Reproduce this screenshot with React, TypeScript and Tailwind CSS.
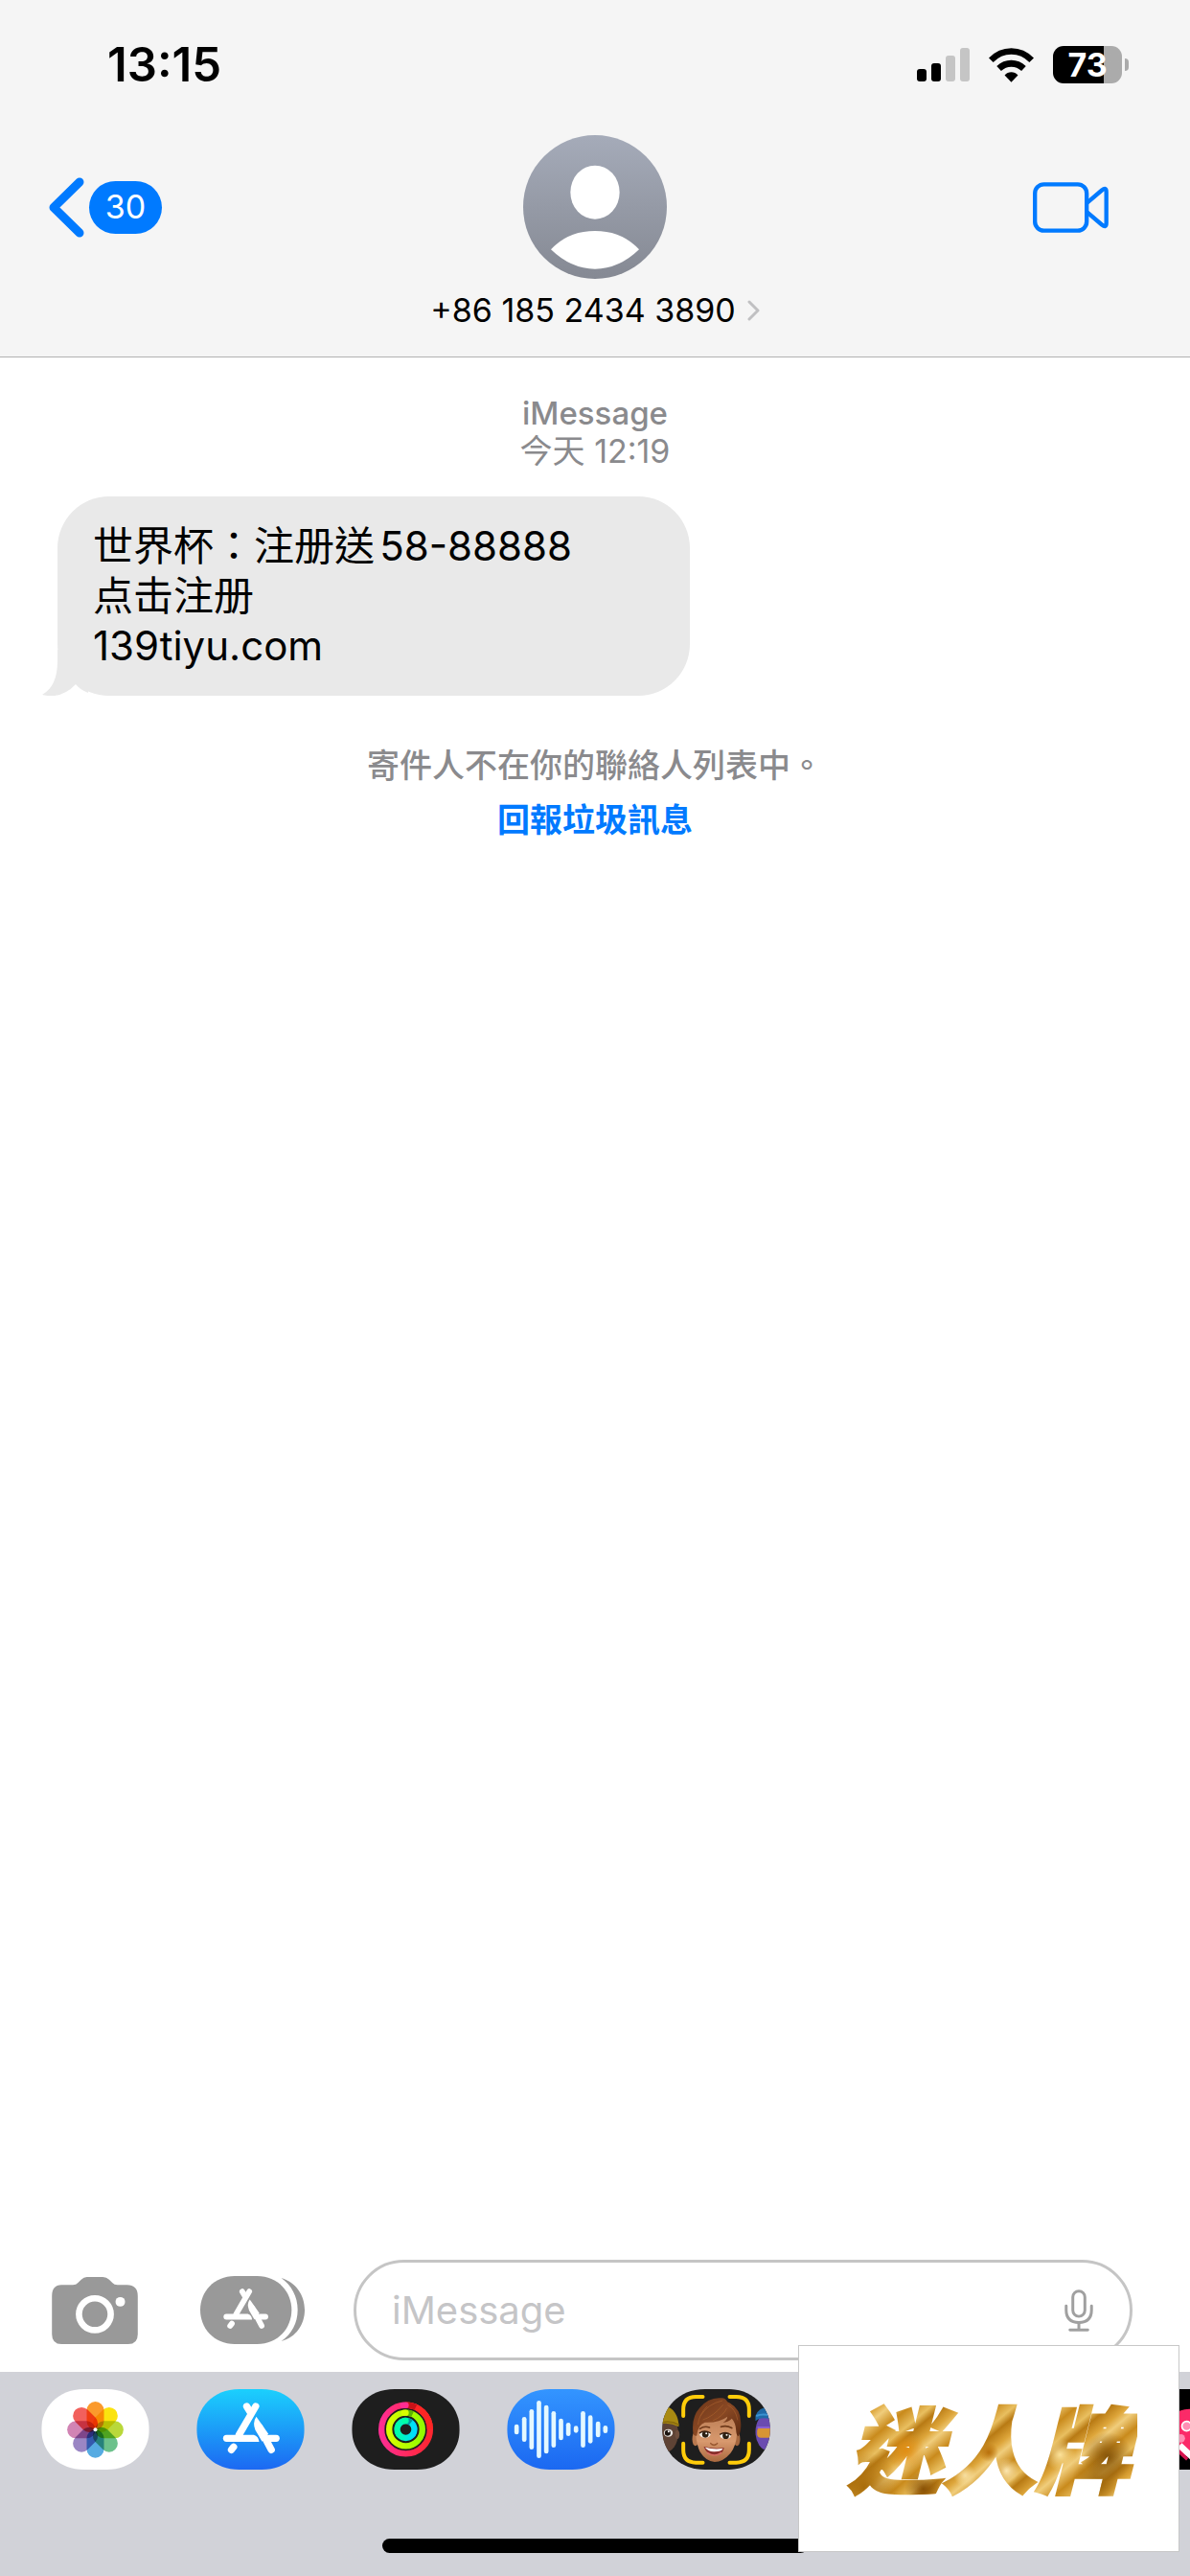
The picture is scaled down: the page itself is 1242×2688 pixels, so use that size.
import type { ReactNode } from 'react';

interface DockApp {
  id: string;
  label: string;
  icon: ReactNode;
}

const PILL = 'M0 126 C0 62 48 0 134 0 H204 C290 0 338 62 338 126 C338 190 290 252 204 252 H134 C48 252 0 190 0 126 Z';

const petals = [
  { angle: 0, color: '#fb9a2c' },
  { angle: 45, color: '#fbe30f' },
  { angle: 90, color: '#b9d83a' },
  { angle: 135, color: '#6cc18b' },
  { angle: 180, color: '#56abe2' },
  { angle: 225, color: '#9a86c4' },
  { angle: 270, color: '#d184b4' },
  { angle: 315, color: '#f2605c' },
];

const waveBars = [
  { x: 30, h: 32 },
  { x: 54, h: 78 },
  { x: 77, h: 126 },
  { x: 100, h: 180 },
  { x: 123, h: 152 },
  { x: 146, h: 114 },
  { x: 169, h: 68 },
  { x: 192, h: 42 },
  { x: 216, h: 22 },
  { x: 238, h: 114 },
  { x: 261, h: 88 },
  { x: 285, h: 50 },
  { x: 308, h: 24 },
];

function Pill({ id, children }: { id: string; children: ReactNode }) {
  return (
    <svg viewBox="0 0 338 252" className="block h-[84px] w-[113px]" aria-hidden="true">
      <defs>
        <clipPath id={`${id}-clip`}>
          <path d={PILL} />
        </clipPath>
      </defs>
      <g clipPath={`url(#${id}-clip)`}>{children}</g>
    </svg>
  );
}

// The three crossed sticks of the App Store, drawn in a 177x160 box
function StoreGlyph() {
  return (
    <g stroke="#fff" strokeWidth="22" strokeLinecap="round" strokeLinejoin="round" fill="none">
      <path d="M102 12 L50 101" />
      <path d="M74 12 L86 32" />
      <path d="M145 112 H166" />
      <path d="M113 76 L151 148" />
      <path d="M33 139 L26 148" />
      <path d="M11 101 H96 Q111 105 113 123 H11 A11 11 0 0 1 11 101 Z" fill="#fff" stroke="none" />
      <path d="M104 44 Q91 62 101 86 L122 122 L142 98 Z" fill="#fff" stroke="none" />
    </g>
  );
}

function PhotosIcon() {
  return (
    <Pill id="photos">
      <rect width="338" height="252" fill="#fff" />
      <g transform="translate(169 127)">
        {petals.map((petal) => (
          <rect
            key={petal.angle}
            x="-27"
            y="-88"
            width="54"
            height="88"
            rx="27"
            fill={petal.color}
            transform={`rotate(${petal.angle})`}
            className="mix-blend-multiply"
          />
        ))}
        <circle r="6" fill="#fff" />
      </g>
    </Pill>
  );
}

function StoreIcon() {
  return (
    <Pill id="store">
      <linearGradient id="store-bg" x1="0" y1="0" x2="0" y2="1">
        <stop offset="0" stopColor="#1bd0fd" />
        <stop offset="1" stopColor="#1c68f2" />
      </linearGradient>
      <rect width="338" height="252" fill="url(#store-bg)" />
      <g transform="translate(83 42)">
        <StoreGlyph />
      </g>
    </Pill>
  );
}

function FitnessIcon() {
  return (
    <Pill id="fitness">
      <linearGradient id="ring-low" x1="0" x2="1">
        <stop offset="0" stopColor="#ff2d92" />
        <stop offset="1" stopColor="#ff2730" />
      </linearGradient>
      <linearGradient id="ring-exercise" x1="0" x2="1">
        <stop offset="0" stopColor="#d8ff00" />
        <stop offset="1" stopColor="#92fb00" />
      </linearGradient>
      <linearGradient id="ring-stand" x1="0" x2="1">
        <stop offset="0" stopColor="#00ffa8" />
        <stop offset="1" stopColor="#00dcff" />
      </linearGradient>
      <rect width="338" height="252" fill="#1e1e1e" />
      <g fill="none" strokeWidth="19">
        <circle cx="169" cy="126" r="76" stroke="url(#ring-low)" />
        <path d="M169 50 A76 76 0 0 1 245 126" stroke="#ff2624" />
        <path d="M176 50 A76 76 0 0 1 200 57" stroke="#c81218" />
        <path d="M160 50.500 H169" stroke="#ff2d92" strokeLinecap="round" />
        <circle cx="169" cy="126" r="52" stroke="url(#ring-exercise)" />
        <path d="M174 74 A52 52 0 0 1 190 79" stroke="#5fb400" />
        <path d="M164 74 H169" stroke="#d8ff00" strokeLinecap="round" />
        <circle cx="169" cy="126" r="27" stroke="url(#ring-stand)" />
        <path d="M173 99 A27 27 0 0 1 185 105" stroke="#0098a4" />
        <path d="M165 99 H169" stroke="#00ffa8" strokeLinecap="round" />
      </g>
    </Pill>
  );
}

function AudioIcon() {
  return (
    <Pill id="audio">
      <linearGradient id="audio-bg" x1="0" y1="0" x2="0" y2="1">
        <stop offset="0" stopColor="#3395ff" />
        <stop offset="1" stopColor="#1b68f1" />
      </linearGradient>
      <rect width="338" height="252" fill="url(#audio-bg)" />
      {waveBars.map((bar) => (
        <rect key={bar.x} x={bar.x - 7} y={126 - bar.h / 2} width="14" height={bar.h} rx="7" fill="#e4f8ff" />
      ))}
    </Pill>
  );
}

function MemojiIcon() {
  return (
    <Pill id="memoji">
      <linearGradient id="memoji-skin" x1="0" y1="0" x2="0" y2="1">
        <stop offset="0" stopColor="#b77a52" />
        <stop offset="0.6" stopColor="#d8996e" />
        <stop offset="1" stopColor="#a9683f" />
      </linearGradient>
      <linearGradient id="memoji-hair" x1="0" y1="0" x2="1" y2="1">
        <stop offset="0" stopColor="#6b3418" />
        <stop offset="0.5" stopColor="#8a4924" />
        <stop offset="1" stopColor="#5c2a12" />
      </linearGradient>
      <rect width="338" height="252" fill="#1e1e1e" />

      {/* Left neighbour */}
      <ellipse cx="8" cy="138" rx="42" ry="60" fill="#5e4335" />
      <ellipse cx="47" cy="142" rx="7" ry="14" fill="#6e4e3d" />
      <path d="M0 60 Q22 48 40 74 Q52 92 52 118 Q26 104 0 108 Z" fill="#a98a12" />
      <path d="M0 104 Q28 98 52 112" stroke="#8a6c0c" strokeWidth="5" fill="none" />
      <ellipse cx="19" cy="137" rx="14" ry="12" fill="#e8e4e0" />
      <circle cx="17" cy="137" r="9" fill="#1c1410" />
      <circle cx="20" cy="133" r="3" fill="#fff" />

      {/* Right neighbour */}
      <ellipse cx="330" cy="134" rx="38" ry="58" fill="#6a4bb0" />
      <path d="M292 84 Q300 56 338 56 V94 Q308 86 292 100 Z" fill="#1f6aa8" />
      <path d="M294 84 Q312 76 338 82" stroke="#3c93d2" strokeWidth="6" fill="none" />
      <rect x="297" y="120" width="46" height="32" rx="12" fill="#d79435" />
      <path d="M298 120 H338" stroke="#8a5fd0" strokeWidth="6" />

      {/* Face */}
      <ellipse cx="104" cy="156" rx="10" ry="22" fill="#b9794f" />
      <ellipse cx="234" cy="156" rx="10" ry="22" fill="#a5673f" />
      <path
        d="M103 110 Q103 66 170 66 Q234 66 234 120 Q236 172 214 200 Q190 228 164 228 Q136 226 118 196 Q104 166 103 110 Z"
        fill="url(#memoji-skin)"
      />
      <path
        d="M97 140 Q90 88 118 58 Q146 24 186 28 Q198 28 204 40 Q246 58 246 104 Q248 134 238 148 Q232 144 231 128 Q230 106 218 92 Q206 104 190 104 Q204 96 204 86 Q178 106 134 104 Q112 110 108 146 Q100 148 97 140 Z"
        fill="url(#memoji-hair)"
      />
      <g fill="none" stroke="#a9602f" strokeWidth="2" strokeLinecap="round">
        <path d="M120 84 Q142 46 188 36" />
        <path d="M128 96 Q160 86 190 50" />
        <path d="M112 110 Q116 78 140 54" />
        <path d="M206 50 Q230 62 236 96" />
        <path d="M160 98 Q190 86 202 60" />
      </g>
      <path d="M118 124 Q132 114 148 120" stroke="#6f3a1b" strokeWidth="5" fill="none" strokeLinecap="round" />
      <path d="M184 118 Q202 112 218 122" stroke="#6f3a1b" strokeWidth="5" fill="none" strokeLinecap="round" />
      <ellipse cx="134" cy="142" rx="17" ry="10" fill="#f4efe8" />
      <ellipse cx="198" cy="146" rx="17" ry="10" fill="#f4efe8" />
      <circle cx="135" cy="142" r="10" fill="#2c2013" />
      <circle cx="199" cy="146" r="10" fill="#2c2013" />
      <circle cx="138" cy="139" r="3" fill="#fff" />
      <circle cx="202" cy="143" r="3" fill="#fff" />
      <path d="M116 138 Q132 126 152 138" stroke="#3a2010" strokeWidth="4" fill="none" />
      <path d="M180 142 Q200 130 216 144" stroke="#3a2010" strokeWidth="4" fill="none" />
      <path d="M152 170 Q162 180 172 170" stroke="#9a5932" strokeWidth="5" fill="none" strokeLinecap="round" />
      <circle cx="162" cy="162" r="10" fill="#d5946a" />
      <path d="M130 180 Q160 188 194 184 Q188 208 164 208 Q140 206 130 180 Z" fill="#8a2f2c" />
      <path d="M134 182 Q160 190 190 186 Q186 196 162 196 Q142 194 134 182 Z" fill="#fff" />
      <path d="M142 200 Q164 214 184 200" stroke="#dc7068" strokeWidth="5" fill="none" strokeLinecap="round" />

      {/* Viewfinder corners */}
      <g fill="none" stroke="#ffcc0a" strokeWidth="12" strokeLinecap="round">
        <path d="M127 24 H105 Q66 24 66 64 V84" />
        <path d="M211 24 H232 Q272 24 272 64 V84" />
        <path d="M127 230 H105 Q66 230 66 190 V170" />
        <path d="M211 230 H232 Q272 230 272 190 V170" />
      </g>
    </Pill>
  );
}

function StickersIcon() {
  return (
    <Pill id="stickers">
      <rect width="338" height="252" fill="#000" />
    </Pill>
  );
}

function SearchIcon() {
  return (
    <Pill id="search">
      <rect width="338" height="252" fill="#e8352c" />
    </Pill>
  );
}

function MusicIcon() {
  return (
    <svg viewBox="0 0 338 252" className="block h-[84px] w-[113px]" aria-hidden="true">
      <path d={PILL} fill="#000" />
      <circle cx="192" cy="136" r="74" fill="#fb2a68" />
      <path d="M162 176 L214 224" stroke="#fff" strokeWidth="20" />
      <path d="M158 194 L186 220" stroke="#d3154f" strokeWidth="10" />
      <circle cx="184" cy="116" r="15" fill="#ff8fb4" stroke="#fff" strokeWidth="5" />
      <circle cx="166" cy="154" r="13" fill="#ff8fb4" />
    </svg>
  );
}

const dockApps: DockApp[] = [
  { id: 'photos', label: '照片', icon: <PhotosIcon /> },
  { id: 'store', label: 'App Store', icon: <StoreIcon /> },
  { id: 'fitness', label: '健身', icon: <FitnessIcon /> },
  { id: 'audio', label: '音訊', icon: <AudioIcon /> },
  { id: 'memoji', label: 'Memoji', icon: <MemojiIcon /> },
  { id: 'stickers', label: '貼圖', icon: <StickersIcon /> },
  { id: 'search', label: '影像', icon: <SearchIcon /> },
  { id: 'music', label: '音樂', icon: <MusicIcon /> },
];

function StatusBar() {
  return (
    <div className="flex h-[135px] items-center justify-between pr-16 pl-28">
      <time className="text-[49px] leading-none font-semibold">13:15</time>
      <div className="flex items-center gap-5">
        <svg viewBox="0 0 55 36" className="h-9 w-[55px]" aria-label="訊號">
          <rect x="0" y="22" width="10" height="13" rx="3" />
          <rect x="15" y="16" width="10" height="19" rx="3" />
          <rect x="30" y="8" width="10" height="27" rx="3" fill="#c5c5c5" />
          <rect x="45" y="0" width="10" height="35" rx="3" fill="#c5c5c5" />
        </svg>
        <svg viewBox="0 0 142 108" className="h-9 w-[47px]" aria-label="Wi-Fi">
          <path d="M0 31 Q30 0 71 0 Q112 0 142 31 L128 45 Q104 20 71 20 Q38 20 14 45 Z" />
          <path d="M25 57 Q45 38 71 38 Q97 38 117 57 L103 72 Q89 59 71 59 Q53 59 39 72 Z" />
          <path d="M50 86 Q59 76 71 76 Q83 76 92 86 L71 108 Z" />
        </svg>
        <div className="flex items-center gap-[3px]">
          <div className="flex h-[39px] w-[72px] items-center justify-center rounded-[11px] bg-linear-to-r from-black from-[74%] to-[#ababab] to-[74%] text-[34px] leading-none font-bold text-white">
            73
          </div>
          <div className="h-[13px] w-1 rounded-r-full bg-[#ababab]" />
        </div>
      </div>
    </div>
  );
}

function ChatHeader() {
  return (
    <header className="border-b border-[#b2b2b2] bg-[#f5f5f5]">
      <StatusBar />
      <div className="grid grid-cols-[1fr_auto_1fr] pt-1.5 pb-7">
        <div className="flex h-[150px] items-center pl-[51px]">
          <button type="button" className="flex items-center gap-[5px]" aria-label="返回">
            <svg viewBox="0 0 37 63" className="h-[63px] w-[37px]" fill="none" stroke="#007aff" strokeWidth="9">
              <path d="M32 5 L5 31.500 L32 58" strokeLinecap="round" strokeLinejoin="round" />
            </svg>
            <span className="flex h-[55px] w-[76px] items-center justify-center rounded-full bg-[#007aff] text-[34px] leading-none text-white">
              30
            </span>
          </button>
        </div>

        <button type="button" className="flex flex-col items-center gap-[13px]">
          <svg viewBox="0 0 450 450" className="size-[150px]" aria-hidden="true">
            <linearGradient id="avatar-bg" x1="0" y1="0" x2="0" y2="1">
              <stop offset="0" stopColor="#a5abb9" />
              <stop offset="1" stopColor="#858993" />
            </linearGradient>
            <circle cx="225" cy="225" r="225" fill="url(#avatar-bg)" />
            <ellipse cx="225" cy="179" rx="77" ry="84" fill="#fff" />
            <path d="M87 358 Q140 300 225 300 Q310 300 363 358 Q300 419 225 419 Q150 419 87 358 Z" fill="#fff" />
          </svg>
          <span className="flex items-center gap-3 text-[34px] leading-10">
            +86 185 2434 3890
            <svg viewBox="0 0 13 22" className="h-[22px] w-[13px]" fill="none" stroke="#c0c0c2" strokeWidth="3">
              <path d="M2 2 L11 11 L2 20" strokeLinecap="round" strokeLinejoin="round" />
            </svg>
          </span>
        </button>

        <div className="flex h-[150px] items-center justify-end pr-[85px]">
          <button type="button" aria-label="視像通話">
            <svg viewBox="0 0 237 158" className="h-[53px] w-[79px]" fill="none" stroke="#007aff" strokeWidth="13">
              <rect x="6.500" y="6.500" width="162" height="145" rx="28" />
              <path d="M168 66 L216 25 Q230 14 230 30 V128 Q230 144 216 133 L168 92" strokeLinejoin="round" />
            </svg>
          </button>
        </div>
      </div>
    </header>
  );
}

function Conversation() {
  return (
    <main className="flex-1 pt-[39px]">
      <div className="text-center leading-[39px] text-[#8a8a8d]">
        <p className="text-[33px] leading-[39px] font-medium">iMessage</p>
        <p className="text-[34px] leading-[39px]">今天 12:19</p>
      </div>

      <div className="relative mt-7 ml-15 w-[660px] rounded-[54px] bg-[#e9e9e9] px-[37px] py-[26px] text-[42px] leading-[52px] [text-autospace:normal]">
        <p>世界杯：注册送58-88888</p>
        <p>点击注册</p>
        <p>139tiyu.com</p>
        <svg viewBox="0 0 48 48" className="absolute bottom-0 -left-4 size-12" aria-hidden="true">
          <path d="M0 48 H48 V32 H35 Q28 44 14 47 Z" fill="#fff" />
          <path d="M16 0 V12 Q16 38 0 47 Q20 52 35 36 Q40 42 48 45 V0 Z" fill="#e9e9e9" />
        </svg>
      </div>

      <div className="mt-11 flex flex-col items-center text-[34px] leading-[57px] font-medium">
        <p className="text-[#8a8a8d]">寄件人不在你的聯絡人列表中。</p>
        <button type="button" className="font-bold text-[#007aff]">
          回報垃圾訊息
        </button>
      </div>
    </main>
  );
}

function Composer() {
  return (
    <form className="flex items-center pr-15 pb-3 pl-[54px]">
      <button type="button" aria-label="相機">
        <svg viewBox="0 0 270 211" className="h-[70px] w-[90px]">
          <path
            d="M30 25 H66 Q76 25 82 18 L92 8 Q100 0 110 0 H160 Q172 0 180 8 L190 18 Q196 25 206 25 H236 Q270 25 270 60 V180 Q270 211 240 211 H30 Q0 211 0 180 V60 Q0 25 30 25 Z"
            fill="#999"
          />
          <circle cx="135" cy="117" r="50" fill="none" stroke="#fff" strokeWidth="20" />
          <circle cx="215" cy="78" r="15" fill="#fff" />
        </svg>
      </button>
      <button type="button" className="ml-[65px]" aria-label="App">
        <svg viewBox="0 0 327 213" className="h-[71px] w-[109px]">
          <path d="M254 6 C300 20 327 60 327 106 C327 152 300 192 254 204 C286 182 305 148 305 106 C305 64 286 30 254 6 Z" fill="#999" />
          <path
            d="M0 106 C0 50 42 0 108 0 H178 C244 0 286 50 286 106 C286 163 244 213 178 213 H108 C42 213 0 163 0 106 Z"
            fill="#999"
          />
          <g transform="translate(73 39) scale(0.79)">
            <StoreGlyph />
          </g>
        </svg>
      </button>
      <div className="ml-[51px] flex h-[105px] min-w-0 flex-1 items-center rounded-full border-3 border-[#c5c5c5] pr-[38px] pl-[37px]">
        <input
          type="text"
          aria-label="iMessage"
          placeholder="iMessage"
          className="min-w-0 flex-1 bg-transparent text-[40px] leading-[52px] outline-none placeholder:text-[#c5c5c7]"
        />
        <button type="button" aria-label="聽寫">
          <svg viewBox="0 0 90 133" className="h-11 w-[30px]" fill="none" stroke="#a0a0a0" strokeWidth="9" strokeLinecap="round">
            <rect x="26" y="5" width="38" height="80" rx="19" />
            <path d="M5 52 V64 Q5 104 45 104 Q85 104 85 64 V52" />
            <path d="M45 106 V126 M17 128 H73" />
          </svg>
        </button>
      </div>
    </form>
  );
}

function AppDock() {
  return (
    <nav className="overflow-hidden bg-[#d1d2d8] pt-[18px] pb-6">
      <div className="flex gap-[49px] pl-[43px]">
        {dockApps.map((app) => (
          <button key={app.id} type="button" className="shrink-0" aria-label={app.label}>
            {app.icon}
          </button>
        ))}
      </div>
      <div className="mx-auto mt-18 h-[15px] w-[444px] rounded-full bg-black" />
    </nav>
  );
}

function BrandBadge() {
  return (
    <div className="absolute right-[11px] bottom-[25px] flex h-[216px] w-[398px] items-center justify-center border border-[#c8c8c8] bg-white pt-2">
      <span className="bg-[radial-gradient(circle_at_22%_48%,#e08e14_0,transparent_8%),radial-gradient(circle_at_8%_80%,#a86c0c_0,transparent_12%),radial-gradient(circle_at_28%_82%,#8a5206_0,transparent_8%),radial-gradient(circle_at_42%_70%,#f7dfa0_0,transparent_6%),radial-gradient(circle_at_50%_50%,#b8700c_0,transparent_6%),radial-gradient(circle_at_56%_66%,#fbe6b0_0,transparent_7%),radial-gradient(circle_at_74%_52%,#fbe29a_0,transparent_7%),radial-gradient(circle_at_90%_54%,#85540a_0,transparent_9%),radial-gradient(circle_at_86%_76%,#9a640c_0,transparent_9%),repeating-linear-gradient(140deg,#c98a1c_0,#e9bf60_14px,#b87a14_22px,#dda53a_34px,#f0cd7c_42px,#c98a1c_56px)] bg-clip-text px-2 text-[98px] leading-[120px] font-black text-transparent italic [-webkit-text-stroke:3px_transparent]">
        迷人牌
      </span>
    </div>
  );
}

export default function App() {
  return (
    <div
      lang="zh-Hant"
      className="relative flex min-h-screen flex-col overflow-hidden bg-white font-['Inter','Noto_Sans_CJK_TC',sans-serif] text-black"
    >
      <ChatHeader />
      <Conversation />
      <Composer />
      <AppDock />
      <BrandBadge />
    </div>
  );
}
